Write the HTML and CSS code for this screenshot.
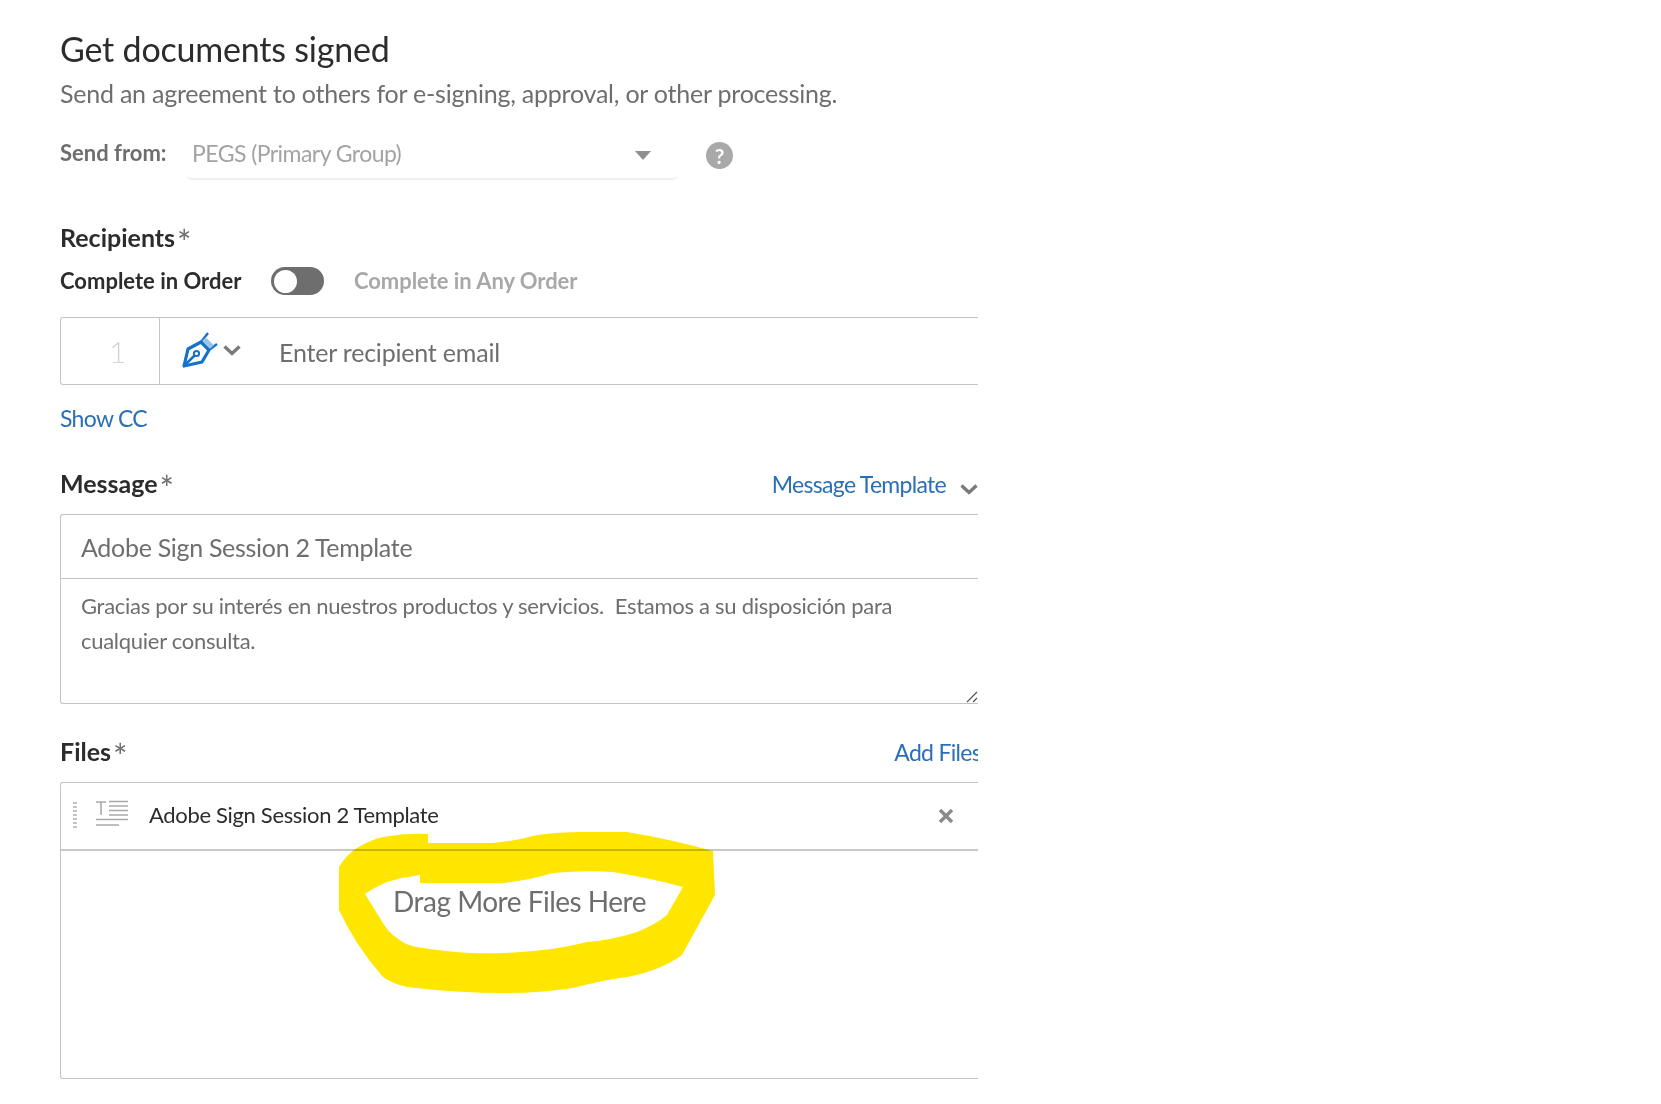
FILE: index.html
```html
<!DOCTYPE html>
<html lang="en">
  <head>
    <meta charset="UTF-8" />
    <title>Get documents signed</title>
    <link rel="stylesheet" href="styles.css">
  </head>

  <body>
    <main class="page">
      <h1 class="title">Get documents signed</h1>
      <p class="subtitle">Send an agreement to others for e-signing, approval, or other processing.</p>

      <div class="send-row">
        <span class="send-label">Send from:</span>
        <div class="send-select">
          <span>PEGS (Primary Group)</span>
          <span class="select-arrow"></span>
        </div>
        <span class="help-icon">?</span>
      </div>

      <div class="section-label recipients-label">Recipients<span class="star">*</span></div>

      <div class="order-row">
        <span class="order-on">Complete in Order</span>
        <span class="toggle"><span class="toggle-knob"></span></span>
        <span class="order-off">Complete in Any Order</span>
      </div>

      <div class="recipient-box">
        <div class="recipient-number">1</div>
        <div class="recipient-role">
          <svg class="pen-icon" viewBox="0 0 36 36" width="36" height="36">
            <path d="M2 34 L6 17 L19 10 L27 18 L20 30 Z" fill="none" stroke="#1473c9" stroke-width="3.2" stroke-linejoin="round"/>
            <path d="M2 34 L13 23" stroke="#1473c9" stroke-width="2.5"/>
            <circle cx="14.500" cy="21.500" r="2.600" fill="none" stroke="#1473c9" stroke-width="2"/>
            <path d="M19 10 L26 1 M27 18 L35 12" stroke="#1473c9" stroke-width="2.4"/>
            <path d="M22 7 L30 15" stroke="#9cc4e8" stroke-width="5"/>
          </svg>
          <svg class="chevron" viewBox="0 0 18 12" width="18" height="12">
            <path d="M1.500 2.500 L9 9.500 L16.500 2.500" fill="none" stroke="#7a7a7a" stroke-width="3.4"/>
          </svg>
        </div>
        <div class="recipient-email">Enter recipient email</div>
      </div>

      <a class="link show-cc">Show CC</a>

      <div class="header-row message-header">
        <div class="section-label">Message<span class="star">*</span></div>
        <div class="template-link">
          <a class="link">Message Template</a>
          <svg class="chevron" viewBox="0 0 18 12" width="18" height="12">
            <path d="M1.500 2.500 L9 9.500 L16.500 2.500" fill="none" stroke="#7a7a7a" stroke-width="3.4"/>
          </svg>
        </div>
      </div>

      <div class="message-box">
        <div class="message-subject">Adobe Sign Session 2 Template</div>
        <div class="message-body">
          Gracias por su interés en nuestros productos y servicios.&nbsp; Estamos a su disposición para<br>
          cualquier consulta.
          <svg class="resize-grip" viewBox="0 0 12 12" width="12" height="12">
            <path d="M1 11 L11 1 M7 11 L11 7" stroke="#555" stroke-width="1.2"/>
          </svg>
        </div>
      </div>

      <div class="header-row files-header">
        <div class="section-label">Files<span class="star">*</span></div>
        <a class="link add-files">Add Files</a>
      </div>

      <div class="files-box">
        <div class="file-row">
          <span class="drag-dots"></span>
          <svg class="file-icon" viewBox="0 0 34 28" width="34" height="28">
            <path d="M1 2 H11 M6 2 V15 M14 1.500 H33 M14 6 H33 M14 10.500 H33 M14 15 H33 M1 19.500 H33 M1 25 H24" stroke="#a9a9a9" stroke-width="1.600" fill="none"/>
          </svg>
          <span class="file-name">Adobe Sign Session 2 Template</span>
          <svg class="file-remove" viewBox="0 0 16 16" width="16" height="16">
            <path d="M2 2 L14 14 M14 2 L2 14" stroke="#8a8a8a" stroke-width="3.400"/>
          </svg>
        </div>
        <div class="drop-area">Drag More Files Here</div>
      </div>
    </main>

    <!-- hand-drawn marker ring on top of the screenshot -->
    <svg class="marker" viewBox="0 0 1661 1104" width="1661" height="1104">
      <path fill-rule="evenodd" fill="#ffe600" d="M339 867 Q346 855 357 848 Q370 840 383 837 Q405 833 428 834 L428 843 L493 843 Q515 841 537 835 Q560 832 580 832 L627 832 Q670 839 713 851 L715 895 L682 955 Q670 964 653 970 Q637 976 620 978 Q600 981 573 988 Q540 993 507 993 Q455 993 407 987 Q393 984 383 977 Q355 945 339 910 Z M365 894 Q375 887 387 882 Q403 877 420 875 L420 883 L503 883 Q530 880 553 873 Q585 870 613 872 Q650 878 683 887 L667 915 Q655 925 637 932 Q612 940 587 942 Q555 950 520 952 Q495 954 470 953 Q440 951 417 947 Q405 945 397 938 Q388 932 383 923 Z"/>
    </svg>
  </body>
</html>
```

FILE: styles.css
```css
body {
  margin: 0;
  background-color: white;
  font-family: Lato, "Noto Sans", sans-serif;
  color: #6e6e6e;
}

.page {
  width: 918px;
  margin-left: 60px;
  padding-top: 29px;
  overflow: hidden;
}

.title {
  margin: 0;
  height: 40px;
  font-size: 34px;
  line-height: 40px;
  font-weight: 400;
  letter-spacing: -0.2px;
  color: #2c2c2c;
}

.subtitle {
  margin: 8px 0 0;
  height: 32px;
  font-size: 25px;
  line-height: 32px;
  letter-spacing: -0.23px;
}

.send-row {
  display: flex;
  align-items: flex-start;
  margin-top: 24px;
  height: 48px;
}

.send-label {
  width: 126px;
  font-size: 22px;
  line-height: 40px;
  font-weight: 700;
  color: #6e6e6e;
}

.send-select {
  display: flex;
  justify-content: space-between;
  align-items: center;
  width: 491px;
  height: 47px;
  padding: 0 26px 5px 6px;
  margin-right: 29px;
  border-bottom: 2px solid #f0f0f0;
  border-radius: 5px;
  font-size: 23px;
  letter-spacing: -0.55px;
  color: #a3a3a3;
  box-sizing: border-box;
}

.select-arrow {
  width: 0;
  height: 0;
  border-left: 8px solid transparent;
  border-right: 8px solid transparent;
  border-top: 9px solid #8e8e8e;
  margin-top: 4px;
}

.help-icon {
  width: 27px;
  height: 27px;
  margin-top: 9px;
  border-radius: 50%;
  background-color: #a9a9a9;
  color: white;
  font-size: 21px;
  font-weight: 700;
  line-height: 27px;
  text-align: center;
}

.section-label {
  font-size: 25px;
  line-height: 30px;
  font-weight: 700;
  color: #2c2c2c;
}

.recipients-label {
  margin-top: 41px;
}

.star {
  margin-left: 2px;
  font-size: 34px;
  line-height: 0;
  font-weight: 400;
  vertical-align: -8px;
  color: #6e6e6e;
}

.order-row {
  display: flex;
  align-items: center;
  margin-top: 13px;
  height: 30px;
  font-size: 22px;
  font-weight: 700;
}

.order-on {
  width: 211px;
  color: #2c2c2c;
}

.order-off {
  margin-left: 30px;
  letter-spacing: -0.05px;
  color: #a8a8a8;
}

.toggle {
  display: flex;
  align-items: center;
  width: 53px;
  height: 28px;
  margin-top: 2px;
  padding: 0 3px;
  box-sizing: border-box;
  border-radius: 14px;
  background-color: #6e6e6e;
}

.toggle-knob {
  width: 23px;
  height: 23px;
  border-radius: 50%;
  background-color: white;
}

.recipient-box {
  display: flex;
  align-items: stretch;
  margin-top: 22px;
  height: 68px;
  box-sizing: border-box;
  border: 1px solid #c4c4c4;
  border-right: none;
  border-radius: 3px 0 0 3px;
}

.recipient-number {
  width: 99px;
  padding-left: 48px;
  box-sizing: border-box;
  border-right: 1px solid #c4c4c4;
  font-size: 30px;
  line-height: 66px;
  font-weight: 300;
  color: #d4d4d4;
}

.recipient-role {
  display: flex;
  align-items: center;
  gap: 5px;
  width: 119px;
  padding-left: 22px;
  padding-bottom: 3px;
  box-sizing: border-box;
}

.pen-icon {
  flex-shrink: 0;
}

.recipient-email {
  font-size: 25px;
  line-height: 69px;
  letter-spacing: -0.2px;
}

.link {
  color: #2a6fb8;
  font-size: 23px;
  line-height: 30px;
  letter-spacing: -0.7px;
}

.show-cc {
  display: block;
  margin-top: 18px;
  height: 30px;
}

.header-row {
  display: flex;
  justify-content: space-between;
  align-items: center;
  height: 30px;
}

.message-header {
  margin-top: 35px;
}

.template-link {
  display: flex;
  align-items: center;
  gap: 14px;
  margin-top: 2px;
}

.template-link .chevron {
  margin-top: 9px;
}

.message-box {
  margin-top: 16px;
  height: 190px;
  box-sizing: border-box;
  border: 1px solid #c4c4c4;
  border-right: none;
  border-radius: 3px 0 0 3px;
}

.message-subject {
  height: 64px;
  padding-left: 20px;
  box-sizing: border-box;
  border-bottom: 1px solid #c4c4c4;
  font-size: 25px;
  line-height: 64px;
  letter-spacing: -0.3px;
}

.message-body {
  position: relative;
  height: 124px;
  padding: 9px 0 0 20px;
  box-sizing: border-box;
  font-size: 22px;
  line-height: 35px;
  letter-spacing: -0.28px;
}

.resize-grip {
  position: absolute;
  right: 0;
  bottom: 0;
}

.files-header {
  margin-top: 32px;
}

.add-files {
  flex-shrink: 0;
  margin-top: 2px;
  margin-right: -3px;
  white-space: nowrap;
}

.files-box {
  margin-top: 16px;
  height: 297px;
  box-sizing: border-box;
  border: 1px solid #c4c4c4;
  border-right: none;
  border-radius: 3px 0 0 3px;
}

.file-row {
  display: flex;
  align-items: center;
  height: 68px;
  box-sizing: border-box;
  border-bottom: 2px solid #c8c8c8;
}

.drag-dots {
  width: 4px;
  height: 28px;
  margin-left: 12px;
  margin-right: 18px;
  background-image: linear-gradient(#c4c4c4 50%, transparent 50%);
  background-size: 4px 4px;
}

.file-icon {
  margin-right: 20px;
  margin-top: -4px;
}

.file-name {
  margin-top: -3px;
  font-size: 22px;
  letter-spacing: -0.33px;
  color: #2c2c2c;
}

.file-remove {
  margin-left: auto;
  margin-right: 24px;
}

.drop-area {
  padding-top: 32px;
  font-size: 28px;
  line-height: 36px;
  letter-spacing: -0.5px;
  text-align: center;
}

.marker {
  position: absolute;
  top: 0;
  left: 0;
  mix-blend-mode: multiply;
  pointer-events: none;
}
```
